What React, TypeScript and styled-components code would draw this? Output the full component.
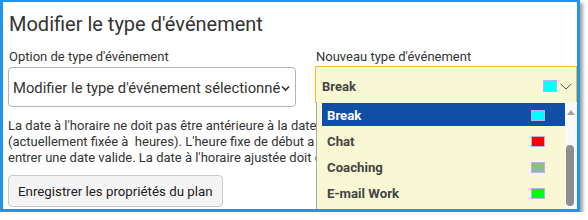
import React from "react";
import styled, { createGlobalStyle } from "styled-components";

const GlobalStyle = createGlobalStyle`
  html, body { margin: 0; padding: 0; background: #ffffff; }
  body { font-family: Roboto, "Liberation Sans", Arial, sans-serif; color: #333333; }
  * { box-sizing: border-box; }
`;

const Frame = styled.div`
  position: relative;
  width: 580px;
  height: 212px;
  border: 3px solid #1e94ee;
  border-top-width: 2px;
  box-shadow: 3px 3px 3px rgba(0, 0, 0, 0.35);
  overflow: hidden;
  background: #ffffff;
  padding-left: 5px;
`;

const Title = styled.h1`
  margin: 10px 0 0 1px;
  font-size: 20px;
  font-weight: 400;
  line-height: 25px;
  color: #333333;
`;

const Columns = styled.div`
  display: flex;
  align-items: flex-start;
  gap: 19px;
  margin-top: 12px;
`;

const Column = styled.div<{ $width?: number }>`
  display: flex;
  flex-direction: column;
  ${(p) => (p.$width ? `width: ${p.$width}px; flex: none;` : "flex: 1;")}
  position: relative;
`;

const Label = styled.label`
  font-size: 13px;
  line-height: 16px;
  padding-left: 1px;
  color: #333333;
`;

const SelectBox = styled.div`
  margin-top: 2px;
  height: 40px;
  display: flex;
  align-items: center;
  justify-content: space-between;
  border: 1px solid #b3b3b3;
  border-radius: 4px;
  padding: 2px 5px 0 4px;
  font-size: 14.8px;
  color: #333333;
  white-space: nowrap;
`;

const Chevron = styled.svg`
  flex: none;
  width: 9px;
  height: 7px;
`;

const FancySelect = styled.div`
  margin-top: 1px;
  height: 37px;
  display: flex;
  align-items: center;
  background: #f8f8d4;
  border: 1px solid #f2c31c;
  padding: 3px 4px 0 6px;
  font-size: 13px;
  font-weight: 700;
  color: #444444;
`;

const SelectedText = styled.span`
  flex: 1;
`;

const Swatch = styled.span<{ $color: string; $h?: number }>`
  flex: none;
  display: inline-block;
  width: 14px;
  height: ${(p) => p.$h ?? 11}px;
  background: ${(p) => p.$color};
  border: 1px solid #b9b2e6;
`;

const SmallChevron = styled.svg`
  flex: none;
  width: 12px;
  height: 7px;
  margin-left: 3px;
`;

const Dropdown = styled.div`
  position: absolute;
  top: calc(100% - 1px);
  left: 1px;
  right: 0;
  height: 120px;
  display: flex;
  background: #f8f8d4;
  border-left: 1px solid #a9a9a9;
  z-index: 2;
`;

const List = styled.ul`
  list-style: none;
  margin: 0;
  padding: 1px 0 0 5px;
  flex: 1;
`;

const Item = styled.li<{ $active?: boolean }>`
  height: 23px;
  margin-bottom: 3px;
  display: flex;
  align-items: center;
  justify-content: space-between;
  padding: 1px 20px 0 5px;
  font-size: 13.2px;
  font-weight: 700;
  background: ${(p) => (p.$active ? "#0f4fa6" : "transparent")};
  color: ${(p) => (p.$active ? "#ffffff" : "#444444")};
`;

const Scrollbar = styled.div`
  position: relative;
  flex: none;
  width: 12px;
  background: #f9f9f9;
`;

const UpArrow = styled.div`
  position: absolute;
  top: 8px;
  left: 2px;
  width: 0;
  height: 0;
  border-left: 4px solid transparent;
  border-right: 4px solid transparent;
  border-bottom: 5px solid #a3a3a3;
`;

const Thumb = styled.div`
  position: absolute;
  top: 43px;
  left: 1px;
  width: 8px;
  height: 61px;
  border-radius: 4px;
  background: #8e8e8e;
`;

const Note = styled.p`
  margin: 11px 0 0;
  font-size: 13px;
  line-height: 16px;
  color: #333333;
  white-space: nowrap;
`;

const Button = styled.button`
  margin-top: 9px;
  height: 32px;
  padding: 0 9px;
  font-family: Roboto, "Liberation Sans", Arial, sans-serif;
  font-size: 13.3px;
  color: #222222;
  background: #f4f4f4;
  border: 1px solid #c9c9c9;
  border-radius: 4px;
`;

const items = [
  { name: "Break", color: "#00ffff" },
  { name: "Chat", color: "#ff0000" },
  { name: "Coaching", color: "#8fbc8f" },
  { name: "E-mail Work", color: "#00ff00" },
];

export default function App() {
  return (
    <>
      <GlobalStyle />
      <Frame>
        <Title>Modifier le type d'événement</Title>
        <Columns>
          <Column $width={288}>
            <Label>Option de type d'événement</Label>
            <SelectBox>
              <span>Modifier le type d'événement sélectionné</span>
              <Chevron viewBox="0 0 9 7">
                <path d="M1 1.5 L4.5 5 L8 1.5" fill="none" stroke="#333" strokeWidth="1.6" />
              </Chevron>
            </SelectBox>
          </Column>
          <Column>
            <Label>Nouveau type d'événement</Label>
            <FancySelect>
              <SelectedText>Break</SelectedText>
              <Swatch $color="#00ffff" $h={12} />
              <SmallChevron viewBox="0 0 12 7">
                <path d="M0.5 0.8 L6 6 L11.5 0.8" fill="none" stroke="#555" strokeWidth="1" />
              </SmallChevron>
            </FancySelect>
            <Dropdown>
              <List>
                {items.map((it, i) => (
                  <Item key={it.name} $active={i === 0}>
                    <span>{it.name}</span>
                    <Swatch $color={it.color} />
                  </Item>
                ))}
              </List>
              <Scrollbar>
                <UpArrow />
                <Thumb />
              </Scrollbar>
            </Dropdown>
          </Column>
        </Columns>
        <Note>
          La date à l'horaire ne doit pas être antérieure à la date de début fixe de la période de planification
          <br />
          (actuellement fixée à &nbsp;heures). L'heure fixe de début a été modifiée. Veuillez
          <br />
          entrer une date valide. La date à l'horaire ajustée doit être postérieure à la date fixe.
        </Note>
        <Button>Enregistrer les propriétés du plan</Button>
      </Frame>
    </>
  );
}
